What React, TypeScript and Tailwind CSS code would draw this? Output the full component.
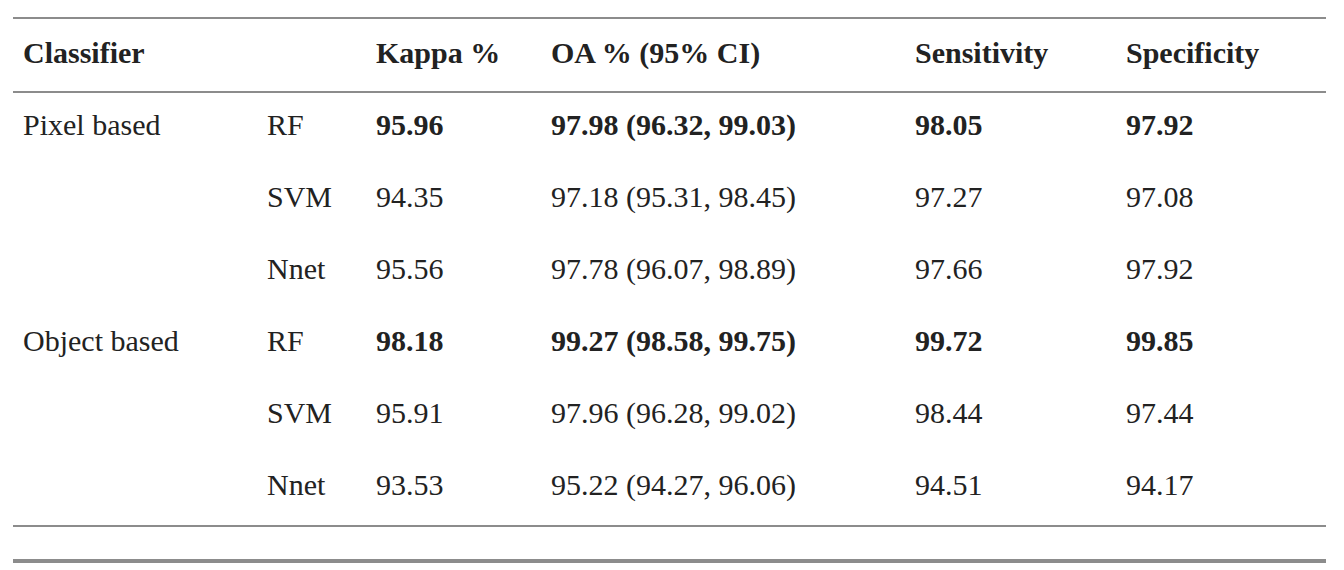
const header = ["Classifier", "", "Kappa %", "OA % (95% CI)", "Sensitivity", "Specificity"];

type Row = {
  group: string;
  model: string;
  kappa: string;
  oa: string;
  sens: string;
  spec: string;
  best?: boolean;
};

const rows: Row[] = [
  { group: "Pixel based", model: "RF", kappa: "95.96", oa: "97.98 (96.32, 99.03)", sens: "98.05", spec: "97.92", best: true },
  { group: "", model: "SVM", kappa: "94.35", oa: "97.18 (95.31, 98.45)", sens: "97.27", spec: "97.08" },
  { group: "", model: "Nnet", kappa: "95.56", oa: "97.78 (96.07, 98.89)", sens: "97.66", spec: "97.92" },
  { group: "Object based", model: "RF", kappa: "98.18", oa: "99.27 (98.58, 99.75)", sens: "99.72", spec: "99.85", best: true },
  { group: "", model: "SVM", kappa: "95.91", oa: "97.96 (96.28, 99.02)", sens: "98.44", spec: "97.44" },
  { group: "", model: "Nnet", kappa: "93.53", oa: "95.22 (94.27, 96.06)", sens: "94.51", spec: "94.17" },
];

const cols = "grid grid-cols-[244px_109px_175px_364px_211px_210px]";

export default function App() {
  return (
    <div
      className="w-[1344px] h-[570px] bg-white text-[#222] pt-[17px]"
      style={{ fontFamily: '"Liberation Serif", serif' }}
    >
      <div className="ml-[13px] w-[1313px]">
        <div className="border-t-2 border-[#8c8c8c]" />
        <div className={`${cols} h-[74px] border-b-2 border-[#8c8c8c]`}>
          {header.map((h, i) => (
            <div key={i} className="pl-[10px] pt-[16px] text-[30px] leading-[36px] font-bold">
              {h}
            </div>
          ))}
        </div>
        {rows.map((r, idx) => {
          const bold = r.best ? "font-bold" : "";
          return (
            <div key={idx} className={`${cols} h-[72px] text-[30px] leading-[36px]`}>
              <div className="pl-[10px] pt-[14px]">{r.group}</div>
              <div className="pl-[10px] pt-[14px]">{r.model}</div>
              <div className={`pl-[10px] pt-[14px] ${bold}`}>{r.kappa}</div>
              <div className={`pl-[10px] pt-[14px] ${bold}`}>{r.oa}</div>
              <div className={`pl-[10px] pt-[14px] ${bold}`}>{r.sens}</div>
              <div className={`pl-[10px] pt-[14px] ${bold}`}>{r.spec}</div>
            </div>
          );
        })}
        <div className="border-t-2 border-[#8c8c8c] h-[34px]" />
        <div className="border-t-4 border-[#8c8c8c]" />
      </div>
    </div>
  );
}
